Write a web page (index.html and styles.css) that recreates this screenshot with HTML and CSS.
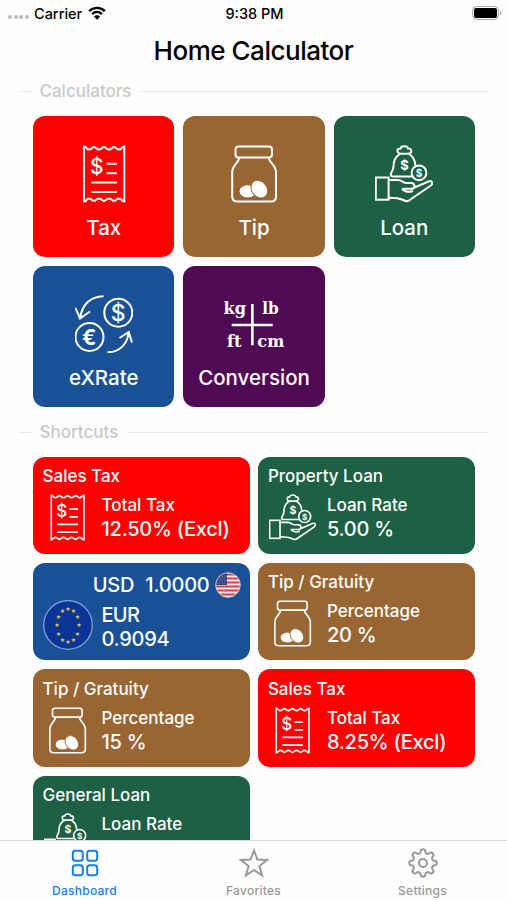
FILE: index.html
```html
<!DOCTYPE html>
<html lang="en">

<head>
    <meta charset="utf-8">
    <title>Home Calculator</title>
    <link rel="stylesheet" href="styles.css">
</head>

<body>
    <!-- shared icons -->
    <svg class="defs" width="0" height="0">
        <symbol id="icon-tax" viewBox="0 0 58 58">
            <path d="M9 1.500C11.500 1.500 11.500 4.500 14 4.500S17 2 19 2s2.500 2.500 5 2.500S27 2 29 2s2.500 2.500 5 2.500S37 2 39 2s2.500 2.500 5 2.500S47 1.500 49.300 1.500V56.500C47 56.500 46.500 53.500 44 53.500S41 56 39 56s-2.500-2.500-5-2.500S31 56 29 56s-2.500-2.500-5-2.500S21 56 19 56s-2.500-2.500-5-2.500S11.500 56.500 9 56.500Z"/>
            <path d="M31.500 18.700H42M31.500 28.300H42M16.500 37.500H42M16.500 47H42"/>
            <text class="glyph" x="21.800" y="28.800" font-size="21">$</text>
        </symbol>
        <symbol id="icon-tip" viewBox="0 0 58 58">
            <rect x="10.500" y="1.500" width="36.500" height="11" rx="3"/>
            <path d="M14 12.500C15 17 7.200 20 7.200 27V51.500Q7.200 56.500 12.200 56.500H46Q51 56.500 51 51.500V27C51 20 43 17 44 12.500"/>
            <ellipse class="coin" cx="22.800" cy="46.300" rx="8.800" ry="6.600"/>
            <ellipse class="coin" cx="34.300" cy="44.200" rx="7.600" ry="9.600" transform="rotate(-38 34.300 44.200)"/>
        </symbol>
        <symbol id="icon-loan" viewBox="0 0 58 58">
            <rect x=".8" y="32.500" width="12.800" height="22.200"/>
            <path d="M25 8.800C21.500 7.500 21.500 3.500 25.500 3.500C26 .5 32.500 .5 33 3.500C37 3.500 37.500 7.500 34 8.800Z"/>
            <path d="M25 9C20 12 18.500 16 18.500 21C18.500 26 16 27 15.800 29C15.700 31 16.500 31.500 18 31.500H37M34 9C38.500 12 40.300 16 40.300 20.500"/>
            <circle cx="44" cy="27.800" r="7.400"/>
            <path d="M13.700 35H23C27 35 28 38 31.500 38H36C40.500 38 40.500 43.800 36 43.800H27M39.500 42.500L53.500 36.500C57 35 58.500 38.500 55.800 40.500L34 55.500C32 57 30 56 28 55C24 53 21 52.700 13.700 52.700"/>
            <path d="M27 43.800C30 47 34 47.500 38 46"/>
            <text class="glyph bold" x="29.500" y="25" font-size="13">$</text>
            <text class="glyph bold" x="44" y="31.600" font-size="10">$</text>
        </symbol>
        <symbol id="icon-rate" viewBox="0 0 58 58">
            <circle cx="43.300" cy="17.700" r="14"/>
            <circle cx="14.500" cy="42" r="14"/>
            <path d="M28.500 1.200C15 1.500 7 10 5.200 23M.5 13L5 23.500L15 16.500"/>
            <path d="M32.500 57.300C45 57 52.500 49 53.500 37.500M44.500 43L53.700 37L57 47.500"/>
            <text class="glyph" x="43.300" y="26" font-size="23">$</text>
            <text class="glyph bold" x="14.200" y="49.600" font-size="21">€</text>
        </symbol>
        <symbol id="icon-units" viewBox="0 0 58 58" overflow="visible">
            <path d="M27.400 9V50.300M6.700 30H47.700" stroke-width="2.600"/>
            <g class="units">
                <text x="-1.500" y="19.300" textLength="22.500" lengthAdjust="spacingAndGlyphs">kg</text>
                <text x="37.300" y="19.300" textLength="16.500" lengthAdjust="spacingAndGlyphs">lb</text>
                <text x="2" y="51.500" textLength="14.500" lengthAdjust="spacingAndGlyphs">ft</text>
                <text x="32.300" y="51.500" textLength="27" lengthAdjust="spacingAndGlyphs">cm</text>
            </g>
        </symbol>
    </svg>

    <div class="status">
        <div class="carrier">
            <span class="dots"><i></i><i></i><i></i><i></i></span>
            <span class="carrier-name">Carrier</span>
            <svg class="wifi" viewBox="0 0 18 14">
                <path d="M1.200 5.200C5.500 .8 12.500 .8 16.800 5.200M4.100 8.100C7 5.300 11 5.300 13.900 8.100"/>
                <path class="wifi-dot" d="M9 13.800L5.900 10.600Q9 8 12.100 10.600Z"/>
            </svg>
        </div>
        <div class="time">9:38 PM</div>
        <div class="battery"><div class="case"><div class="charge"></div></div><div class="nub"></div></div>
    </div>
    <h1>Home Calculator</h1>

    <div class="content">
        <div class="section">Calculators</div>
        <div class="tiles">
            <div class="tile red"><svg class="icon"><use href="#icon-tax"/></svg><span>Tax</span></div>
            <div class="tile brown"><svg class="icon"><use href="#icon-tip"/></svg><span>Tip</span></div>
            <div class="tile green"><svg class="icon"><use href="#icon-loan"/></svg><span>Loan</span></div>
            <div class="tile blue"><svg class="icon"><use href="#icon-rate"/></svg><span>eXRate</span></div>
            <div class="tile purple"><svg class="icon"><use href="#icon-units"/></svg><span>Conversion</span></div>
        </div>

        <div class="section shortcuts-title">Shortcuts</div>
        <div class="shortcuts">
            <div class="card red">
                <div class="name">Sales Tax</div>
                <div class="row">
                    <svg class="icon"><use href="#icon-tax"/></svg>
                    <div><div class="label">Total Tax</div><div class="value">12.50% (Excl)</div></div>
                </div>
            </div>
            <div class="card green">
                <div class="name">Property Loan</div>
                <div class="row">
                    <svg class="icon"><use href="#icon-loan"/></svg>
                    <div><div class="label">Loan Rate</div><div class="value">5.00 %</div></div>
                </div>
            </div>
            <div class="card blue rate">
                <div class="base">
                    <span>USD</span><span>1.0000</span>
                    <svg class="flag-us" viewBox="0 0 26 26">
                        <clipPath id="us-clip"><circle cx="13" cy="13" r="12.300"/></clipPath>
                        <g clip-path="url(#us-clip)">
                            <rect width="26" height="26" fill="#f4e8ec"/>
                            <path d="M0 2.500H26M0 6.500H26M0 10.500H26M0 14.500H26M0 18.500H26M0 22.500H26" stroke="#d8404e" stroke-width="2"/>
                            <rect width="12" height="13" fill="#3c4a80"/>
                            <path d="M2 5H12M2 8H12M2 11H12" stroke="#8d98bb" stroke-width=".8" stroke-dasharray="1 1.500"/>
                        </g>
                        <circle cx="13" cy="13" r="12.300" fill="none" stroke="#c9cfe2" stroke-width=".8"/>
                    </svg>
                </div>
                <div class="row">
                    <svg class="flag-eu" viewBox="0 0 50 50">
                        <circle cx="25" cy="25" r="24.300" fill="#093596" stroke="#86a9dc" stroke-width="1.200"/>
                        <g class="stars">
                            <text x="25" y="11">★</text>
                            <text x="30.500" y="13">★</text>
                            <text x="34.500" y="19">★</text>
                            <text x="36" y="27.300">★</text>
                            <text x="34.500" y="35.500">★</text>
                            <text x="30.500" y="41.500">★</text>
                            <text x="25" y="43.500">★</text>
                            <text x="19.500" y="41.500">★</text>
                            <text x="15.500" y="35.500">★</text>
                            <text x="14" y="27.300">★</text>
                            <text x="15.500" y="19">★</text>
                            <text x="19.500" y="13">★</text>
                        </g>
                    </svg>
                    <div><div class="value code">EUR</div><div class="value">0.9094</div></div>
                </div>
            </div>
            <div class="card brown">
                <div class="name">Tip / Gratuity</div>
                <div class="row">
                    <svg class="icon"><use href="#icon-tip"/></svg>
                    <div><div class="label">Percentage</div><div class="value">20 %</div></div>
                </div>
            </div>
            <div class="card brown">
                <div class="name">Tip / Gratuity</div>
                <div class="row">
                    <svg class="icon"><use href="#icon-tip"/></svg>
                    <div><div class="label">Percentage</div><div class="value">15 %</div></div>
                </div>
            </div>
            <div class="card red">
                <div class="name">Sales Tax</div>
                <div class="row">
                    <svg class="icon"><use href="#icon-tax"/></svg>
                    <div><div class="label">Total Tax</div><div class="value">8.25% (Excl)</div></div>
                </div>
            </div>
            <div class="card green">
                <div class="name">General Loan</div>
                <div class="row">
                    <svg class="icon"><use href="#icon-loan"/></svg>
                    <div><div class="label">Loan Rate</div><div class="value">5.00 %</div></div>
                </div>
            </div>
        </div>
    </div>

    <div class="tabs">
        <div class="tab active">
            <svg viewBox="0 0 30 30">
                <rect x="2.800" y="2.800" width="10" height="10" rx="2.500"/>
                <rect x="17.200" y="2.800" width="10" height="10" rx="2.500"/>
                <rect x="2.800" y="17.200" width="10" height="10" rx="2.500"/>
                <rect x="17.200" y="17.200" width="10" height="10" rx="2.500"/>
            </svg>
            <span>Dashboard</span>
        </div>
        <div class="tab">
            <svg viewBox="0 0 30 30">
                <path d="M15 2.500L18.400 11.600L28 12L20.400 18L23.100 27.500L15 22L6.900 27.500L9.600 18L2 12L11.600 11.600Z"/>
            </svg>
            <span>Favorites</span>
        </div>
        <div class="tab">
            <svg viewBox="0 0 30 30">
                <circle cx="15" cy="15" r="4"/>
                <path id="gear" d=""/>
            </svg>
            <span>Settings</span>
        </div>
    </div>

    <script>
        // eight rounded teeth around the centre of the settings icon
        let points = [];
        for (let i = 0; i <= 160; i++) {
            let a = i / 160 * Math.PI * 2;
            let r = 11.9 + 1.9 * Math.tanh(1.8 * Math.cos(8 * a));
            points.push((15 + r * Math.sin(a)).toFixed(2) + " " + (15 - r * Math.cos(a)).toFixed(2));
        }
        document.getElementById("gear").setAttribute("d", "M" + points.join("L") + "Z");
    </script>
</body>

</html>
```
FILE: styles.css
```css
*{
    box-sizing: border-box;
}

body{
    margin: 0;
    height: 900px;
    display: flex;
    flex-direction: column;
    overflow: hidden;
    background: #fefefe;
    color: #000;
    font-family: Inter, "Liberation Sans", sans-serif;
}

.defs{
    position: absolute;
}

/* status bar */
.status{
    display: grid;
    grid-template-columns: 1fr auto 1fr;
    align-items: center;
    height: 26px;
    padding: 0 6px 0 8px;
    font-size: 14.5px;
    font-weight: 500;
}

.carrier{
    display: flex;
    align-items: center;
}

.dots{
    display: flex;
    gap: 1.500px;
    width: 26px;
    padding-top: 8px;
}

.dots i{
    width: 4px;
    height: 4px;
    border-radius: 50%;
    background: #bbb;
}

.wifi{
    width: 18px;
    height: 14px;
    margin-left: 6px;
    fill: none;
    stroke: #000;
    stroke-width: 2.4;
}

.wifi .wifi-dot{
    fill: #000;
    stroke: none;
}

.battery{
    display: flex;
    align-items: center;
    justify-self: end;
    gap: 1px;
}

.case{
    width: 27px;
    height: 14px;
    padding: 1px;
    border: 1.5px solid #aaa;
    border-radius: 4.500px;
}

.charge{
    height: 100%;
    border-radius: 2px;
    background: #000;
}

.nub{
    width: 1.500px;
    height: 4px;
    background: #aaa;
}

h1{
    margin: 0;
    height: 50px;
    line-height: 50px;
    text-align: center;
    font-size: 26px;
    font-weight: 500;
    letter-spacing: -.48px;
}

/* scrolling area */
.content{
    flex: 1;
    min-height: 0;
    overflow: hidden;
}

.section{
    display: flex;
    align-items: center;
    gap: 8.500px;
    height: 20px;
    margin: 5px 19px 14.600px 20px;
    color: #cacaca;
    font-size: 17px;
    font-weight: 500;
}

.section::before, .section::after{
    content: "";
    height: 1px;
    background: #e8e8e8;
}

.section::before{
    width: 11px;
}

.section::after{
    flex: 1;
}

.shortcuts-title{
    margin-top: 14.800px;
    margin-bottom: 14.500px;
}

.tiles{
    display: grid;
    grid-template-columns: repeat(3, 1fr);
    grid-auto-rows: 141.5px;
    gap: 8.800px;
    padding: 0 32px 0 33px;
}

.tile{
    display: flex;
    flex-direction: column;
    align-items: center;
    padding-top: 29px;
    border-radius: 12px;
    color: #fff;
    font-size: 20.5px;
    font-weight: 500;
}

.tile .icon{
    width: 58px;
    height: 58px;
}

.tile span{
    margin-top: 12px;
    line-height: 26px;
}

.icon{
    flex: none;
    overflow: visible;
    fill: none;
    stroke: #fff;
    stroke-width: 2;
}

.glyph{
    fill: #fff;
    stroke: none;
    text-anchor: middle;
    font-weight: 500;
}

.bold{
    font-weight: 700;
}

.coin{
    fill: #fff;
    stroke: var(--tile);
    stroke-width: 1;
}

.units{
    fill: #fff;
    stroke: none;
    font-family: "DejaVu Serif", serif;
    font-size: 17px;
    font-weight: bold;
}

.red{
    --tile: #fe0000;
}

.brown{
    --tile: #996633;
}

.green{
    --tile: #1d6044;
}

.blue{
    --tile: #1a5196;
}

.purple{
    --tile: #500a54;
}

.tile, .card{
    background: var(--tile);
}

.shortcuts{
    display: grid;
    grid-template-columns: repeat(2, 1fr);
    grid-auto-rows: 97.5px;
    gap: 8.800px;
    padding: 0 32px 0 33px;
}

.card{
    padding: 9.500px 9px 0 9.500px;
    border-radius: 12px;
    color: #fff;
    font-size: 17px;
    font-weight: 500;
}

.name{
    height: 21px;
    line-height: 21px;
}

.row{
    display: flex;
    gap: 11px;
    margin-top: 7px;
}

.card .icon{
    width: 47px;
    height: 47px;
    margin-left: 1px;
}

.label{
    height: 23px;
    line-height: 23px;
}

.value{
    height: 24px;
    line-height: 24px;
    font-size: 20px;
    font-weight: 500;
    letter-spacing: -.25px;
}

.base{
    display: flex;
    align-items: center;
    justify-content: flex-end;
    height: 25px;
    font-size: 20px;
    font-weight: 500;
    letter-spacing: -.2px;
}

.base span + span{
    margin: 0 5px 0 11px;
}

.flag-us{
    width: 26px;
    height: 26px;
}

.rate .row{
    gap: 9px;
    margin-top: 3px;
}

.flag-eu{
    width: 50px;
    height: 50px;
}

.stars{
    fill: #e8c83c;
    font-family: "DejaVu Sans", sans-serif;
    font-size: 6px;
    text-anchor: middle;
}

.rate .code{
    margin-top: 2.500px;
    letter-spacing: -.7px;
}

/* bottom tabs */
.tabs{
    display: flex;
    height: 60px;
    border-top: 1px solid #d8d8d8;
}

.tab{
    flex: 1;
    display: flex;
    flex-direction: column;
    align-items: center;
    padding-top: 7px;
    color: #999;
    font-size: 12px;
    font-weight: 500;
    letter-spacing: .25px;
}

.tab svg{
    width: 30px;
    height: 30px;
    fill: none;
    stroke: currentColor;
    stroke-width: 2;
}

.tab span{
    margin-top: 5px;
    line-height: 16px;
}

.active{
    color: #147efb;
}
```
